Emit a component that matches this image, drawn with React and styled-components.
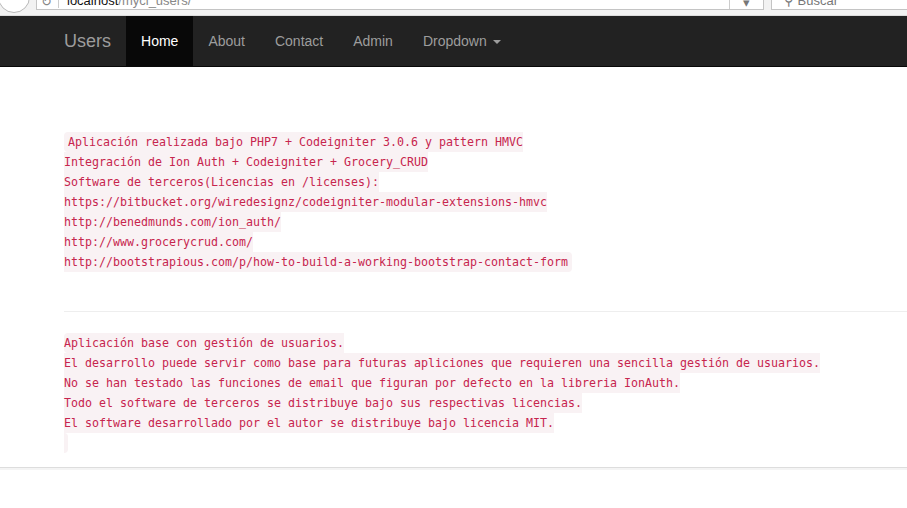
import React from "react";
import styled, { createGlobalStyle } from "styled-components";

const GlobalStyle = createGlobalStyle`
  html, body {
    margin: 0;
    padding: 0;
    background: #fff;
  }
  body {
    font-family: "Liberation Sans", Arial, sans-serif;
    font-size: 14px;
    line-height: 20px;
    color: #333;
    overflow: hidden;
  }
`;

const block1 = [
  "Aplicación realizada bajo PHP7 + Codeigniter 3.0.6 y pattern HMVC",
  "Integración de Ion Auth + Codeigniter + Grocery_CRUD",
  "Software de terceros(Licencias en /licenses):",
  "https://bitbucket.org/wiredesignz/codeigniter-modular-extensions-hmvc",
  "http://benedmunds.com/ion_auth/",
  "http://www.grocerycrud.com/",
  "http://bootstrapious.com/p/how-to-build-a-working-bootstrap-contact-form",
].join("\n");

const block2 =
  [
    "Aplicación base con gestión de usuarios.",
    "El desarrollo puede servir como base para futuras apliciones que requieren una sencilla gestión de usuarios.",
    "No se han testado las funciones de email que figuran por defecto en la libreria IonAuth.",
    "Todo el software de terceros se distribuye bajo sus respectivas licencias.",
    "El software desarrollado por el autor se distribuye bajo licencia MIT.",
  ].join("\n") + "\n\u200b";

const links = ["Home", "About", "Contact", "Admin"];

export default function App() {
  return (
    <Page>
      <GlobalStyle />
      <Chrome>
        <BackBtn />
        <Address>
          <Reload>↻</Reload>
          <Url>
            localhost<UrlPath>/mycl_users/</UrlPath>
          </Url>
          <AddrDrop>▾</AddrDrop>
        </Address>
        <Search>
          <SearchText>⚲ Buscar</SearchText>
        </Search>
      </Chrome>

      <Navbar>
        <NavInner>
          <Brand>Users</Brand>
          <Nav>
            {links.map((l, i) => (
              <NavLink key={l} $active={i === 0}>
                {l}
              </NavLink>
            ))}
            <NavLink>
              Dropdown <Caret />
            </NavLink>
          </Nav>
        </NavInner>
      </Navbar>

      <Main>
        <Block>
          <Code>{block1}</Code>
        </Block>
        <Rule />
        <Block>
          <Code $flush>{block2}</Code>
        </Block>
      </Main>
      <Footer />
    </Page>
  );
}

const Page = styled.div`
  width: 907px;
  min-height: 508px;
`;

const Chrome = styled.div`
  height: 15px;
  background: #f2f2f2;
  border-bottom: 1px solid #dcdcdc;
  display: flex;
  align-items: flex-start;
  overflow: hidden;
`;

const BackBtn = styled.div`
  flex: none;
  width: 30px;
  height: 30px;
  margin: -19px 6px 0 -2px;
  border-radius: 50%;
  border: 1px solid #b8b8b8;
  background: #fff;
`;

const Address = styled.div`
  flex: none;
  width: 726px;
  height: 9px;
  background: #fff;
  border: 1px solid #c4c4c4;
  border-top: none;
  display: flex;
  align-items: flex-end;
  overflow: hidden;
  font-size: 13px;
  line-height: 13px;
`;

const Reload = styled.span`
  color: #888;
  margin: 0 8px 1px 4px;
  padding-right: 6px;
  border-right: 1px solid #ccc;
`;

const Url = styled.span`
  flex: 1;
  color: #111;
  margin-bottom: 2px;
`;

const UrlPath = styled.span`
  color: #888;
`;

const AddrDrop = styled.span`
  width: 33px;
  text-align: center;
  color: #777;
  border-left: 1px solid #ccc;
`;

const Search = styled.div`
  flex: 1;
  margin-left: 7px;
  height: 9px;
  background: #fff;
  border: 1px solid #c4c4c4;
  border-top: none;
  border-right: none;
  display: flex;
  align-items: flex-end;
  overflow: hidden;
  font-size: 13px;
  line-height: 13px;
`;

const SearchText = styled.span`
  color: #777;
  margin: 0 0 2px 12px;
`;

const Navbar = styled.nav`
  height: 50px;
  background: #222;
  border-bottom: 1px solid #080808;
`;

const NavInner = styled.div`
  display: flex;
  padding-left: 49px;
  height: 50px;
`;

const Brand = styled.a`
  padding: 15px;
  height: 50px;
  box-sizing: border-box;
  font-size: 18px;
  line-height: 20px;
  color: #9d9d9d;
  text-decoration: none;
`;

const Nav = styled.ul`
  display: flex;
  margin: 0;
  padding: 0;
  list-style: none;
`;

const NavLink = styled.li`
  padding: 15px;
  line-height: 20px;
  font-size: 14px;
  color: ${(p) => (p.$active ? "#fff" : "#9d9d9d")};
  background: ${(p) => (p.$active ? "#080808" : "transparent")};
`;

const Caret = styled.span`
  display: inline-block;
  width: 0;
  height: 0;
  margin-left: 2px;
  vertical-align: middle;
  border-top: 4px solid #9d9d9d;
  border-left: 4px solid transparent;
  border-right: 4px solid transparent;
`;

const Main = styled.main`
  padding: 65px 0 0 64px;
`;

const Block = styled.div`
  font-family: "DejaVu Sans Mono", "Liberation Mono", monospace;
  font-size: 11.63px;
  line-height: 20px;
`;

const Code = styled.code`
  font-family: inherit;
  font-size: inherit;
  line-height: inherit;
  white-space: pre;
  color: #c7254e;
  background: #f9f2f4;
  padding: 3px 4px 3px ${(p) => (p.$flush ? "0" : "4px")};
  border-radius: 4px;
`;

const Rule = styled.hr`
  margin: 39px 0 21px;
  border: 0;
  border-top: 1px solid #eee;
`;

const Footer = styled.footer`
  margin-top: 14px;
  border-top: 1px solid #ddd;
  height: 2px;
  background: #f4f4f4;
`;
